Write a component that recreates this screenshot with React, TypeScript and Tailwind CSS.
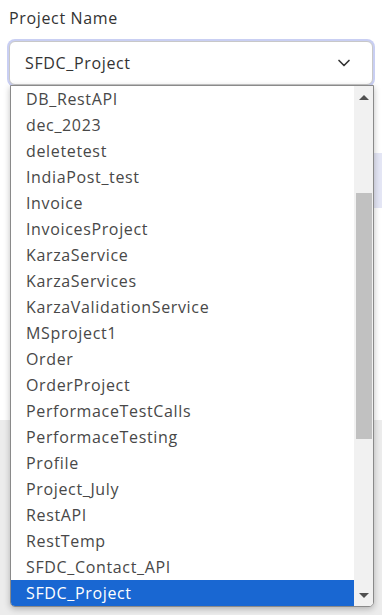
import { ChevronDown } from 'lucide-react'

const projects = [
  'DB_RestAPI',
  'dec_2023',
  'deletetest',
  'IndiaPost_test',
  'Invoice',
  'InvoicesProject',
  'KarzaService',
  'KarzaServices',
  'KarzaValidationService',
  'MSproject1',
  'Order',
  'OrderProject',
  'PerformaceTestCalls',
  'PerformaceTesting',
  'Profile',
  'Project_July',
  'RestAPI',
  'RestTemp',
  'SFDC_Contact_API',
  'SFDC_Project',
]

export default function App() {
  const selected = 'SFDC_Project'

  return (
    <div
      className="relative w-[382px] h-[615px] overflow-hidden bg-white tracking-[0.65px]"
      style={{ fontFamily: '"Open Sans", sans-serif' }}
    >
      {/* background form content peeking behind the list */}
      <div className="absolute right-0 top-[153px] w-[10px] h-[55px] bg-[#e4e6f5]" />
      <div className="absolute left-0 right-0 top-[420px] bottom-0 bg-[#ececec]" />

      <div className="relative px-[9px] pt-[7px]">
        <label className="block text-[16px] leading-[22px] text-[#333]">Project Name</label>
        <div className="mt-[12px] h-[44px] rounded-[6px] border border-[#c8c8c8] ring-2 ring-[#c9cff3] bg-white flex items-center justify-between pl-[15px] pr-[18px]">
          <span className="text-[16px] text-[#333]">{selected}</span>
          <ChevronDown className="w-5 h-5 text-[#333]" strokeWidth={2} />
        </div>
      </div>

      <div className="absolute left-[10px] top-[85px] w-[364px] h-[522px] rounded-b-[5px] border border-[#8a8a8a] bg-white shadow-[0_2px_6px_rgba(0,0,0,0.25)] flex overflow-hidden">
        <ul className="flex-1">
          {projects.map((p) => (
            <li
              key={p}
              className={
                p === selected
                  ? 'h-[26px] flex items-center pl-[15px] text-[16px] bg-[#1967d2] text-white'
                  : 'h-[26px] flex items-center pl-[15px] text-[16px] text-[#484848]'
              }
            >
              <span className="-mt-[1px]">{p}</span>
            </li>
          ))}
        </ul>
        <div className="w-[19px] bg-[#f1f1f1] flex flex-col items-center">
          <div className="h-[22px] flex items-center justify-center">
            <div className="w-0 h-0 border-l-[5px] border-r-[5px] border-b-[5px] border-l-transparent border-r-transparent border-b-[#505050]" />
          </div>
          <div className="mt-[85px] w-[16px] h-[246px] bg-[#c1c1c1]" />
          <div className="flex-1" />
          <div className="h-[22px] flex items-center justify-center">
            <div className="w-0 h-0 border-l-[5px] border-r-[5px] border-t-[5px] border-l-transparent border-r-transparent border-t-[#505050]" />
          </div>
        </div>
      </div>
    </div>
  )
}
